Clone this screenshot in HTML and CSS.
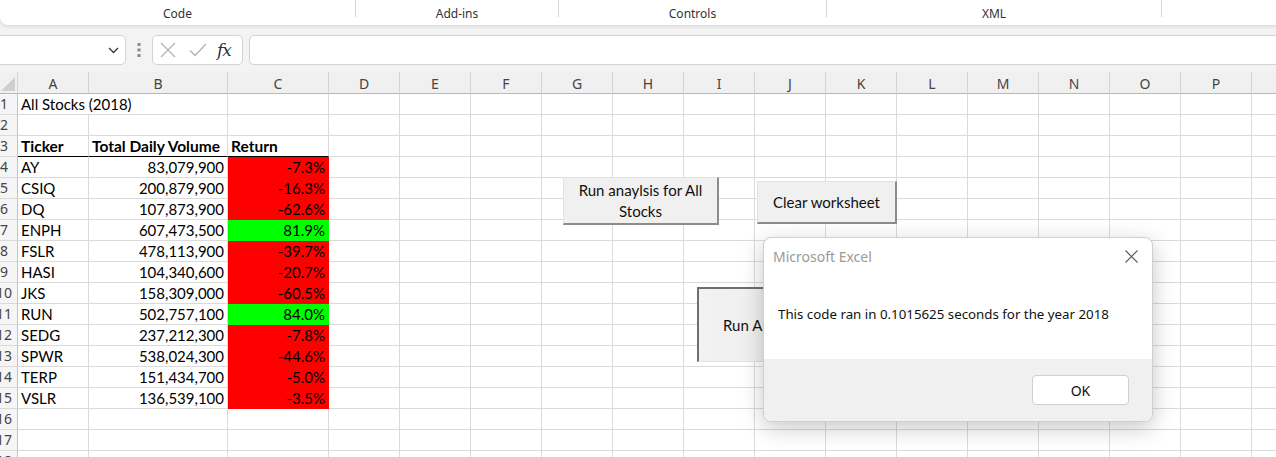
FILE: index.html
```html
<!DOCTYPE html>
<html>
<head>
<meta charset="utf-8">
<link rel="stylesheet" href="styles.css">
</head>
<body>
<div class="ribbon">
  <div class="grp g1">Code</div><div class="sep"></div>
  <div class="grp g2">Add-ins</div><div class="sep"></div>
  <div class="grp g3">Controls</div><div class="sep"></div>
  <div class="grp g4">XML</div><div class="sep"></div>
</div>
<div class="fbar">
  <div class="namebox"><svg width="11" height="7" viewBox="0 0 11 7"><path d="M1 1 L5.5 5.5 L10 1" fill="none" stroke="#333" stroke-width="1.3"/></svg></div>
  <div class="dots"><svg width="4" height="14" viewBox="0 0 4 14"><rect x="0.5" y="0" width="3" height="3" fill="#8a8a8a"/><rect x="0.5" y="5.5" width="3" height="3" fill="#8a8a8a"/><rect x="0.5" y="11" width="3" height="3" fill="#8a8a8a"/></svg></div>
  <div class="fxgroup">
    <svg class="ic-x" width="16" height="16" viewBox="0 0 16 16"><path d="M1 1 L15 15 M15 1 L1 15" stroke="#b3b3b3" stroke-width="1.3" fill="none"/></svg>
    <svg class="ic-ok" width="18" height="14" viewBox="0 0 18 14"><path d="M1 7.5 L6 12.5 L17 1" stroke="#b3b3b3" stroke-width="1.3" fill="none"/></svg>
    <span class="fx">fx</span>
  </div>
  <div class="finput"></div>
</div>
<div class="sheet">
  <div class="corner"><svg width="14" height="14" viewBox="0 0 14 14"><path d="M14 0 L14 14 L0 14 Z" fill="#cfcfcf"/></svg></div>
  <div class="ch">A</div><div class="ch">B</div><div class="ch">C</div><div class="ch">D</div><div class="ch">E</div><div class="ch">F</div><div class="ch">G</div><div class="ch">H</div><div class="ch">I</div><div class="ch">J</div><div class="ch">K</div><div class="ch">L</div><div class="ch">M</div><div class="ch">N</div><div class="ch">O</div><div class="ch">P</div><div class="ch"></div>

  <div class="rh"><span>1</span></div><div class="c span2">All Stocks (2018)</div><div class="c"></div><div class="fill"></div>
  <div class="rh"><span>2</span></div><div class="c"></div><div class="c"></div><div class="c"></div><div class="fill"></div>
  <div class="rh"><span>3</span></div><div class="c b hb">Ticker</div><div class="c b hb">Total Daily Volume</div><div class="c b hb">Return</div><div class="fill"></div>
  <div class="rh"><span>4</span></div><div class="c">AY</div><div class="c r">83,079,900</div><div class="c r red">-7.3%</div><div class="fill"></div>
  <div class="rh"><span>5</span></div><div class="c">CSIQ</div><div class="c r">200,879,900</div><div class="c r red">-16.3%</div><div class="fill"></div>
  <div class="rh"><span>6</span></div><div class="c">DQ</div><div class="c r">107,873,900</div><div class="c r red">-62.6%</div><div class="fill"></div>
  <div class="rh"><span>7</span></div><div class="c">ENPH</div><div class="c r">607,473,500</div><div class="c r green">81.9%</div><div class="fill"></div>
  <div class="rh"><span>8</span></div><div class="c">FSLR</div><div class="c r">478,113,900</div><div class="c r red">-39.7%</div><div class="fill"></div>
  <div class="rh"><span>9</span></div><div class="c">HASI</div><div class="c r">104,340,600</div><div class="c r red">-20.7%</div><div class="fill"></div>
  <div class="rh"><span>10</span></div><div class="c">JKS</div><div class="c r">158,309,000</div><div class="c r red">-60.5%</div><div class="fill"></div>
  <div class="rh"><span>11</span></div><div class="c">RUN</div><div class="c r">502,757,100</div><div class="c r green">84.0%</div><div class="fill"></div>
  <div class="rh"><span>12</span></div><div class="c">SEDG</div><div class="c r">237,212,300</div><div class="c r red">-7.8%</div><div class="fill"></div>
  <div class="rh"><span>13</span></div><div class="c">SPWR</div><div class="c r">538,024,300</div><div class="c r red">-44.6%</div><div class="fill"></div>
  <div class="rh"><span>14</span></div><div class="c">TERP</div><div class="c r">151,434,700</div><div class="c r red">-5.0%</div><div class="fill"></div>
  <div class="rh"><span>15</span></div><div class="c">VSLR</div><div class="c r">136,539,100</div><div class="c r red">-3.5%</div><div class="fill"></div>
  <div class="rh"><span>16</span></div><div class="c"></div><div class="c"></div><div class="c"></div><div class="fill"></div>
  <div class="rh"><span>17</span></div><div class="c"></div><div class="c"></div><div class="c"></div><div class="fill"></div>
  <div class="rh"><span>18</span></div><div class="c"></div><div class="c"></div><div class="c"></div><div class="fill"></div>
</div>

<div class="btn btn-all">Run anaylsis for All<br>Stocks</div>
<div class="btn btn-clear">Clear worksheet</div>
<div class="btn btn-run pressed">Run Analysis</div>

<div class="dialog">
  <div class="dlg-head">
    <span class="dlg-title">Microsoft Excel</span>
    <svg class="dlg-close" width="13" height="13" viewBox="0 0 13 13"><path d="M0.5 0.5 L12.5 12.5 M12.5 0.5 L0.5 12.5" stroke="#5a5a5a" stroke-width="1.1" fill="none"/></svg>
  </div>
  <div class="dlg-body">This code ran in 0.1015625 seconds for the year 2018</div>
  <div class="dlg-foot"><div class="ok">OK</div></div>
</div>
</body>
</html>
```
FILE: styles.css
```css
* { box-sizing: border-box; }
body {
  margin: 0;
  width: 1276px;
  height: 457px;
  overflow: hidden;
  background: #f3f3f3;
  position: relative;
  font-family: "Noto Sans", "Open Sans", sans-serif;
}

/* ribbon */
.ribbon {
  height: 25px;
  width: 1290px;
  background: #fff;
  border-bottom-left-radius: 8px;
  display: flex;
  align-items: flex-start;
  box-shadow: 0 1px 4px rgba(0,0,0,0.14);
  position: relative;
  z-index: 1;
}
.grp {
  height: 25px;
  display: flex;
  align-items: center;
  justify-content: center;
  font-size: 12px;
  color: #333;
  padding-top: 1px;
}
.g1 { width: 355px; }
.g2 { width: 202px; }
.g3 { width: 267px; }
.g4 { width: 334px; }
.sep { width: 1px; height: 17px; background: #d6d6d6; }

/* formula bar */
.fbar {
  display: flex;
  height: 30px;
  margin-top: 10px;
}
.namebox {
  margin-left: -10px;
  width: 136px;
  background: #fff;
  border: 1px solid #d3d3d3;
  border-radius: 5px;
  display: flex;
  align-items: center;
  justify-content: flex-end;
  padding-right: 6px;
}
.dots {
  width: 26px;
  display: flex;
  align-items: center;
  justify-content: center;
}
.fxgroup {
  width: 91px;
  background: #fff;
  border: 1px solid #d3d3d3;
  border-radius: 5px;
  display: flex;
  align-items: center;
  padding-left: 7px;
}
.ic-x { margin-right: 13px; }
.ic-ok { margin-right: 10px; }
.fx {
  font-family: "DejaVu Serif", "Liberation Serif", serif;
  font-style: italic;
  font-size: 17px;
  color: #333;
  letter-spacing: -1px;
}
.finput {
  flex: 1;
  margin-left: 6px;
  margin-right: -10px;
  background: #fff;
  border: 1px solid #d3d3d3;
  border-radius: 5px;
}

/* sheet grid */
.sheet {
  margin-top: 7px;
  display: grid;
  width: max-content;
  grid-template-columns: 18px 71px 139px 101px repeat(14, 71px);
  grid-template-rows: 22px;
  grid-auto-rows: 21px;
  background: #fff;
}
.corner, .ch {
  background: #f0f0f0;
  border-right: 1px solid #d4d4d4;
  border-bottom: 1px solid #b8b8b8;
}
.corner {
  display: flex;
  align-items: flex-end;
  padding-bottom: 2px;
  padding-left: 1px;
}
.ch {
  display: flex;
  align-items: center;
  justify-content: center;
  font-size: 14px;
  color: #444;
  padding-top: 2px;
}
.rh {
  background: #f5f5f5;
  border-right: 1px solid #c4c4c4;
  border-bottom: 1px solid #dadada;
  overflow: hidden;
}
.rh span {
  display: block;
  width: 30px;
  margin-left: -11px;
  text-align: center;
  font-size: 14px;
  line-height: 20px;
  color: #444;
}
.c {
  background: #fff;
  border-right: 1px solid #dadada;
  border-bottom: 1px solid #dadada;
  font-family: "Lato", "Liberation Sans", sans-serif;
  font-size: 15px;
  line-height: 20px;
  color: #000;
  padding: 0 3px;
  white-space: nowrap;
}
.span2 { grid-column: span 2; }
.r { text-align: right; }
.b { font-weight: bold; font-size: 15.5px; }
.hb { border-bottom-color: #000; }
.red { background: #ff0000; border-color: #ff0000; }
.green { background: #00ff00; border-color: #00ff00; }
.fill {
  grid-column: span 14;
  border-bottom: 1px solid #dadada;
  background: repeating-linear-gradient(to right, #fff 0 70px, #dadada 70px 71px);
}

/* form buttons (floating over the sheet) */
.btn {
  position: absolute;
  background: #f0f0f0;
  border-top: 1px solid #e2e2e2;
  border-left: 1px solid #e2e2e2;
  border-right: 2px solid #8c8c8c;
  border-bottom: 2px solid #8c8c8c;
  font-family: "Lato", "Liberation Sans", sans-serif;
  font-size: 15px;
  color: #111;
  text-align: center;
  display: flex;
  align-items: center;
  justify-content: center;
  line-height: 21px;
}
.btn-all { left: 563px; top: 177px; width: 156px; height: 48px; }
.btn-clear { left: 757px; top: 181px; width: 140px; height: 43px; }
.btn-run {
  left: 697px; top: 287px; width: 200px; height: 75px;
  justify-content: flex-start;
  padding-left: 24px;
}
.pressed {
  border-top: 2px solid #6e6e6e;
  border-left: 2px solid #6e6e6e;
  border-right: 1px solid #e2e2e2;
  border-bottom: 1px solid #e2e2e2;
  background: linear-gradient(to right, #f2f2f2, #e9e9e9);
}

/* message box */
.dialog {
  position: absolute;
  left: 763px;
  top: 237px;
  width: 390px;
  height: 185px;
  background: #fff;
  border: 1px solid #cfcfcf;
  border-radius: 8px;
  box-shadow: 0 6px 22px rgba(0,0,0,0.22);
  display: flex;
  flex-direction: column;
  overflow: hidden;
}
.dlg-head {
  height: 36px;
  display: flex;
  align-items: center;
  justify-content: space-between;
  padding: 0 14px 0 9px;
}
.dlg-title {
  font-size: 14px;
  color: #9a9a9a;
}
.dlg-body {
  flex: 1;
  display: flex;
  align-items: center;
  padding-left: 14px;
  padding-bottom: 5px;
  font-size: 13.3px;
  color: #111;
}
.dlg-foot {
  height: 62px;
  background: #f0f0f0;
  display: flex;
  justify-content: flex-end;
  align-items: flex-start;
  padding: 16px 23px 0 0;
}
.ok {
  width: 97px;
  height: 30px;
  background: #fff;
  border: 1px solid #d0d0d0;
  border-radius: 4px;
  display: flex;
  align-items: center;
  justify-content: center;
  font-size: 14px;
  color: #111;
}
```
